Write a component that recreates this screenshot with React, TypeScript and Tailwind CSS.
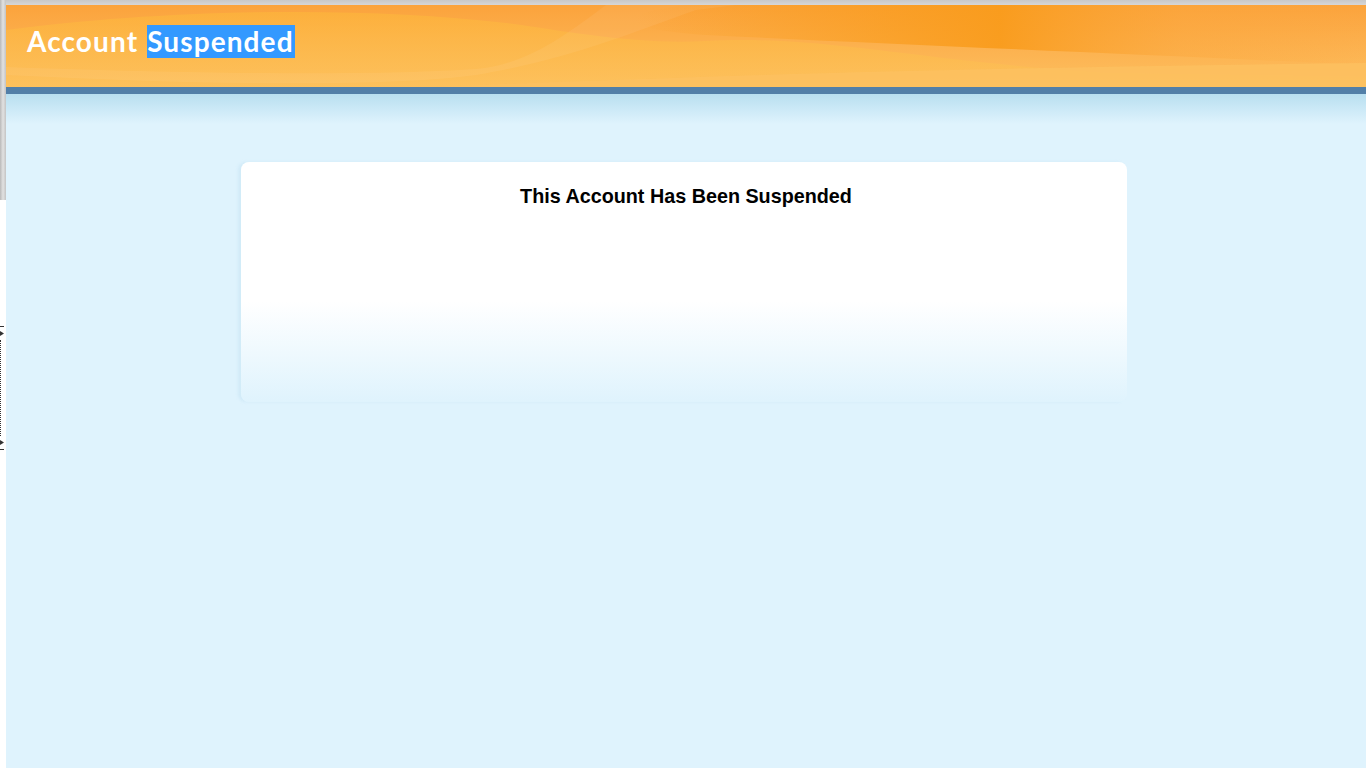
import React from "react";

function HeaderWaves() {
  return (
    <svg className="absolute inset-0 h-full w-full" viewBox="0 0 1360 82" preserveAspectRatio="none">
      <defs>
        <linearGradient id="dark" x1="0" y1="0" x2="1" y2="0">
          <stop offset="0" stopColor="#f99b1a" stopOpacity="0" />
          <stop offset="0.5" stopColor="#f99b1a" stopOpacity="0.9" />
          <stop offset="0.75" stopColor="#fba63a" stopOpacity="0.4" />
          <stop offset="1" stopColor="#fba63a" stopOpacity="0" />
        </linearGradient>
        <linearGradient id="glow" x1="0" y1="0" x2="0" y2="1">
          <stop offset="0" stopColor="#fdbb3a" stopOpacity="0.9" />
          <stop offset="1" stopColor="#fdc35a" stopOpacity="0.9" />
        </linearGradient>
      </defs>
      <path d="M680 0 L1360 0 L1360 60 C1150 50 900 40 700 30 C 620 25 600 10 680 0 Z" fill="url(#dark)" />
      <path d="M0 25 C150 5 350 0 500 18 C560 26 630 40 700 36 C820 30 900 55 1100 68 L1360 72 L1360 82 L0 82 Z" fill="url(#glow)" opacity="0.55" />
      <path d="M0 70 C200 80 380 82 470 70 C 560 55 620 30 690 5 L730 0 L600 0 C 560 30 520 60 470 64 C 380 70 220 70 0 62 Z" fill="#ffffff" opacity="0.06" />
      <path d="M430 82 C700 70 1000 62 1360 58 L1360 82 Z" fill="#fdc160" opacity="0.8" />
    </svg>
  );
}

export default function App() {
  return (
    <div className="flex min-h-[768px] w-full bg-[#dff3fd]">
      <div className="flex w-[6px] shrink-0 flex-col bg-white">
        <div className="h-[200px] bg-gradient-to-r from-[#b9b9b9] via-[#e2e2e2] to-[#c4c4c4]" />
        <div className="mt-[126px] flex flex-col items-start gap-[4px]">
          <div className="h-px w-[4px] bg-[#333]" />
          <div className="h-[5px] w-[4px] bg-[#333] [clip-path:polygon(0_0,100%_50%,0_100%)]" />
          <div className="h-[96px] w-px border-l border-dotted border-[#333]" />
          <div className="h-[5px] w-[4px] bg-[#333] [clip-path:polygon(0_0,100%_50%,0_100%)]" />
          <div className="h-px w-[4px] bg-[#333]" />
        </div>
      </div>
      <div className="flex flex-1 flex-col">
        <div className="h-[5px] bg-gradient-to-b from-[#c8c8c8] to-[#d6d6d6]" />
        <div className="relative h-[82px] overflow-hidden bg-gradient-to-b from-[#fba33c] to-[#fdbf5f]">
          <HeaderWaves />
          <h1 className="relative flex pl-[21px] pt-[20px] font-['Lato','DejaVu_Sans',sans-serif] text-[28px] font-bold leading-[33px] tracking-[1.1px] text-white">
            <span className="pr-[9px]">Account</span>
            <span className="bg-[#3399ff] pr-[1px]">Suspended</span>
          </h1>
        </div>
        <div className="h-[7px] bg-[#527fa8]" />
        <div className="h-[30px] bg-gradient-to-b from-[#b8dff0] to-[#dff3fd]" />
        <div className="flex justify-center pr-[1px] pt-[38px]">
          <div className="flex h-[240px] w-[886px] -translate-x-[2px] flex-col items-center rounded-[8px] bg-gradient-to-b from-white from-[58%] to-[#dff3fd] pl-[5px] pt-[22px] shadow-[-3px_0_3px_rgba(170,210,235,0.25)]">
            <h2 className="font-['Liberation_Sans','Arial',sans-serif] text-[19.75px] font-bold leading-[24px] text-black">
              This Account Has Been Suspended
            </h2>
          </div>
        </div>
      </div>
    </div>
  );
}
